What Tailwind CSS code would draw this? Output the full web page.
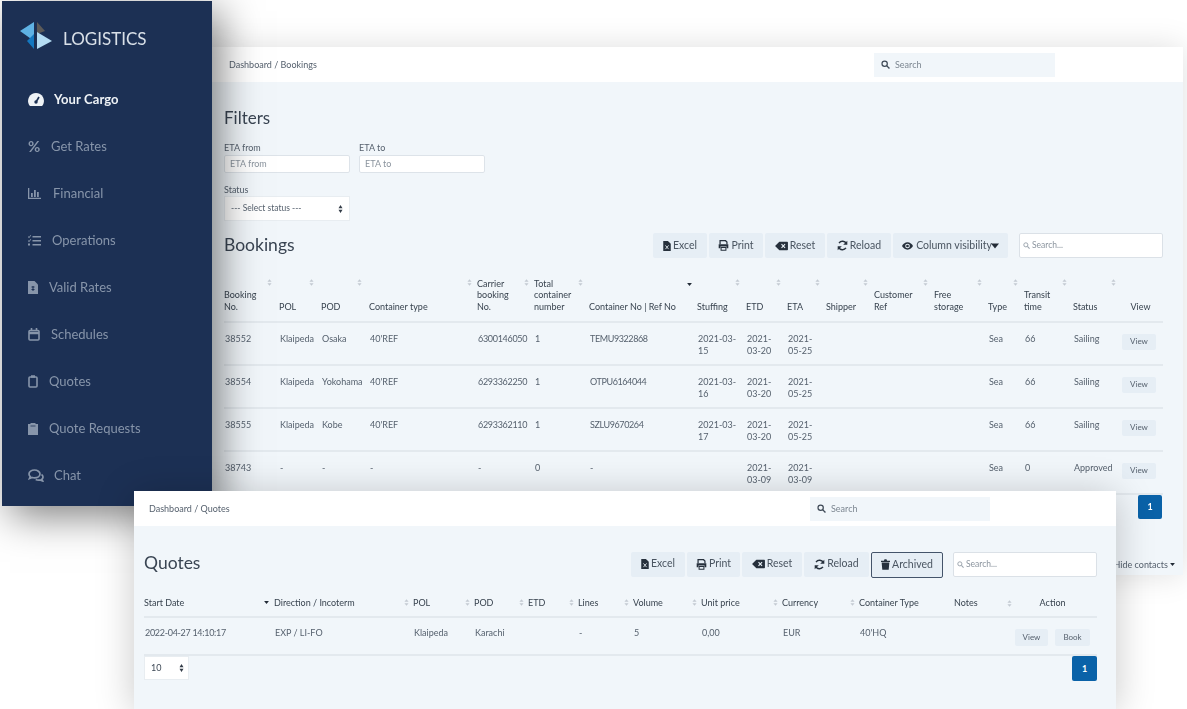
<!DOCTYPE html>
<html lang="en">
<head>
    <meta charset="UTF-8">
    <meta name="viewport" content="width=device-width, initial-scale=1.0">
    <title>Logistics</title>
    <script src="https://cdn.jsdelivr.net/npm/@tailwindcss/browser@4"></script>
</head>
<body class="bg-white font-['Lato',sans-serif] text-[#3f4a57] overflow-hidden">
    <svg class="hidden">
        <symbol id="sort" viewBox="0 0 6 8"><path d="M3 0L5.500 3H.5zM3 8L.5 5h5z" fill="#c3cad2"/></symbol>
        <symbol id="down" viewBox="0 0 8 5"><path d="M0 0h8L4 5z" fill="#222b36"/></symbol>
        <symbol id="search" viewBox="0 0 16 16"><circle cx="6.500" cy="6.500" r="4.700" fill="none" stroke="currentColor" stroke-width="2.200"/><path d="M10 10l5 5" stroke="currentColor" stroke-width="2.400"/></symbol>
        <symbol id="file" viewBox="0 0 12 16"><path d="M0 0h7.500L12 4.500V16H0z" fill="currentColor"/><path d="M3.500 7l5 6M8.500 7l-5 6" stroke="#e8f0f6" stroke-width="1.400"/></symbol>
        <symbol id="print" viewBox="0 0 16 16"><path d="M3 6V1h8l2 2v3" fill="none" stroke="currentColor" stroke-width="1.800"/><path d="M1 6h14v6h-2.500V9.500h-9V12H1z" fill="currentColor"/><path d="M4.500 11h7v4h-7z" fill="none" stroke="currentColor" stroke-width="1.500"/></symbol>
        <symbol id="back" viewBox="0 0 18 14"><path d="M6 1h11a1 1 0 0 1 1 1v10a1 1 0 0 1-1 1H6L0 7z" fill="currentColor"/><path d="M9 4.500l5 5M14 4.500l-5 5" stroke="#e8f0f6" stroke-width="1.600"/></symbol>
        <symbol id="sync" viewBox="0 0 16 16"><path d="M13.500 5.500A6 6 0 0 0 3 4.500M2.500 10.500A6 6 0 0 0 13 11.500" fill="none" stroke="currentColor" stroke-width="2.200"/><path d="M15 1v6H9zM1 15V9h6z" fill="currentColor"/></symbol>
        <symbol id="eye" viewBox="0 0 18 12"><path d="M9 0c4 0 7.500 3 9 6-1.500 3-5 6-9 6S1.500 9 0 6c1.500-3 5-6 9-6z" fill="currentColor"/><circle cx="9" cy="6" r="3.800" fill="#e8f0f6"/><circle cx="9" cy="6" r="2.200" fill="currentColor"/></symbol>
        <symbol id="trash" viewBox="0 0 14 16"><path d="M0 2h4.500l1-2h3l1 2H14v2H0zM1 5h12l-1 11H2z" fill="currentColor"/></symbol>
        <symbol id="select" viewBox="0 0 6 10"><path d="M3 0l2.500 4H.5zM3 10L.5 6h5z" fill="#333c47"/></symbol>
    </svg>

    <div class="relative w-[1187px] h-[709px] overflow-hidden">

        <!-- bookings window -->
        <div class="absolute left-[212px] top-[47px] w-[971px] h-[528px] bg-[#f1f6fa] shadow-[0_0_30px_rgba(0,0,0,0.13)]">
            <div class="h-[35px] bg-white flex items-center pl-[17px] text-[9px] text-[#56616e] blur-[0.3px]">
                <span class="w-[645px]">Dashboard / Bookings</span>
                <div class="w-[181px] h-[24px] bg-[#f1f6fa] flex items-center pl-[7px] gap-[5px] text-[#7d8792]">
                    <svg class="w-[9px] h-[9px] text-[#3f4a57]"><use href="#search"/></svg>Search
                </div>
            </div>
            <div class="pl-[12px] pr-[20px] blur-[0.3px]">
                <h2 class="text-[17px] leading-[20px] mt-[26px] text-[#3a4553]">Filters</h2>
                <div class="flex gap-[9px] mt-[14px]">
                    <div class="w-[126px]">
                        <p class="text-[9px] leading-[11px] text-[#56616e]">ETA from</p>
                        <div class="h-[18px] mt-[2px] bg-white border border-[#dde3e9] rounded-[2px] text-[9px] text-[#8b949e] flex items-center pl-[5px]">ETA from</div>
                    </div>
                    <div class="w-[126px]">
                        <p class="text-[9px] leading-[11px] text-[#56616e]">ETA to</p>
                        <div class="h-[18px] mt-[2px] bg-white border border-[#dde3e9] rounded-[2px] text-[9px] text-[#8b949e] flex items-center pl-[5px]">ETA to</div>
                    </div>
                </div>
                <p class="text-[9px] leading-[11px] mt-[11px] text-[#56616e]">Status</p>
                <div class="w-[126px] h-[25px] mt-[1px] bg-white border border-[#e8edf1] text-[8.500px] text-[#56616e] flex items-center justify-between px-[6px]">
                    --- Select status ---
                    <svg class="w-[5px] h-[8px]"><use href="#select"/></svg>
                </div>
                <div class="flex items-center mt-[12px] h-[25px]">
                    <h2 class="text-[17.500px] text-[#3a4553] w-[429px]">Bookings</h2>
                    <div class="flex gap-[2px] text-[10.500px] text-[#4a5561]">
                        <div class="w-[54px] h-[25px] bg-[#e6eef5] rounded-[2px] flex items-center justify-center gap-[2px]"><svg class="w-[8px] h-[10px] text-[#26303c]"><use href="#file"/></svg>Excel</div>
                        <div class="w-[54px] h-[25px] bg-[#e6eef5] rounded-[2px] flex items-center justify-center gap-[2px]"><svg class="w-[11px] h-[11px] text-[#26303c]"><use href="#print"/></svg>Print</div>
                        <div class="w-[60px] h-[25px] bg-[#e6eef5] rounded-[2px] flex items-center justify-center gap-[2px]"><svg class="w-[13px] h-[10px] text-[#26303c]"><use href="#back"/></svg>Reset</div>
                        <div class="w-[64px] h-[25px] bg-[#e6eef5] rounded-[2px] flex items-center justify-center gap-[2px]"><svg class="w-[11px] h-[11px] text-[#26303c]"><use href="#sync"/></svg>Reload</div>
                        <div class="w-[115px] h-[25px] bg-[#e6eef5] rounded-[2px] flex items-center justify-center gap-[3px]"><svg class="w-[11px] h-[8px] text-[#26303c]"><use href="#eye"/></svg>Column visibility<svg class="-ml-[4px] w-[8px] h-[6px]"><use href="#down"/></svg></div>
                    </div>
                    <div class="ml-[11px] w-[144px] h-[25px] bg-white border border-[#dbe1e7] rounded-[2px] flex items-center pl-[3px] gap-[2px] text-[8.500px] text-[#8b949e]">
                        <svg class="w-[7px] h-[7px] text-[#9aa3ad]"><use href="#search"/></svg>Search...
                    </div>
                </div>
                <table class="table-fixed w-[939px] mt-[18px] border-collapse text-[9px] leading-[11.500px]">
                    <colgroup>
                        <col class="w-[55px]"><col class="w-[42px]"><col class="w-[48px]"><col class="w-[108px]"><col class="w-[57px]"><col class="w-[55px]"><col class="w-[108px]"><col class="w-[49px]"><col class="w-[41px]"><col class="w-[39px]"><col class="w-[48px]"><col class="w-[60px]"><col class="w-[54px]"><col class="w-[36px]"><col class="w-[49px]"><col class="w-[45px]"><col class="w-[45px]">
                    </colgroup>
                    <thead class="text-[#38434f]">
                        <tr class="h-[46px] border-b-2 border-[#e3e9ee] [&>th]:relative [&>th]:align-bottom [&>th]:text-left [&>th]:font-normal [&>th]:pb-[9px]">
                            <th>Booking<br>No.<svg class="absolute right-[7px] top-[3px] w-[5px] h-[7px]"><use href="#sort"/></svg></th>
                            <th>POL<svg class="absolute right-[7px] top-[3px] w-[5px] h-[7px]"><use href="#sort"/></svg></th>
                            <th>POD<svg class="absolute right-[7px] top-[3px] w-[5px] h-[7px]"><use href="#sort"/></svg></th>
                            <th>Container type<svg class="absolute right-[5px] top-[3px] w-[5px] h-[7px]"><use href="#sort"/></svg></th>
                            <th>Carrier<br>booking<br>No.<svg class="absolute right-[5px] top-[3px] w-[5px] h-[7px]"><use href="#sort"/></svg></th>
                            <th>Total<br>container<br>number<svg class="absolute right-[6px] top-[3px] w-[5px] h-[7px]"><use href="#sort"/></svg></th>
                            <th>Container No | Ref No<svg class="absolute right-[5px] top-[7px] w-[5px] h-[3px]"><use href="#down"/></svg></th>
                            <th>Stuffing<svg class="absolute right-[6px] top-[3px] w-[5px] h-[7px]"><use href="#sort"/></svg></th>
                            <th>ETD<svg class="absolute right-[6px] top-[3px] w-[5px] h-[7px]"><use href="#sort"/></svg></th>
                            <th>ETA<svg class="absolute right-[6px] top-[3px] w-[5px] h-[7px]"><use href="#sort"/></svg></th>
                            <th>Shipper<svg class="absolute right-[6px] top-[3px] w-[5px] h-[7px]"><use href="#sort"/></svg></th>
                            <th>Customer<br>Ref<svg class="absolute right-[6px] top-[3px] w-[5px] h-[7px]"><use href="#sort"/></svg></th>
                            <th>Free<br>storage<svg class="absolute right-[6px] top-[3px] w-[5px] h-[7px]"><use href="#sort"/></svg></th>
                            <th>Type<svg class="absolute right-[6px] top-[3px] w-[5px] h-[7px]"><use href="#sort"/></svg></th>
                            <th>Transit<br>time<svg class="absolute right-[6px] top-[3px] w-[5px] h-[7px]"><use href="#sort"/></svg></th>
                            <th>Status<svg class="absolute right-[2px] top-[3px] w-[5px] h-[7px]"><use href="#sort"/></svg></th>
                            <th class="text-center!">View</th>
                        </tr>
                    </thead>
                    <tbody class="text-[#56616e] [&>tr]:h-[43px] [&>tr]:border-b-2 [&>tr]:border-[#e3e9ee] [&_td]:align-top [&_td]:pt-[10px] [&_td]:pl-[1px]">
                        <tr><td>38552</td><td>Klaipeda</td><td>Osaka</td><td>40'REF</td><td class="tracking-[-0.3px]">6300146050</td><td>1</td><td class="tracking-[-0.4px]">TEMU9322868</td><td>2021-03-<br>15</td><td>2021-<br>03-20</td><td>2021-<br>05-25</td><td></td><td></td><td></td><td>Sea</td><td>66</td><td>Sailing</td><td><div class="w-[34px] h-[16px] ml-[3px] mt-[1px] bg-[#e6eef5] rounded-[2px] text-[8px] flex items-center justify-center">View</div></td></tr>
                        <tr><td>38554</td><td>Klaipeda</td><td>Yokohama</td><td>40'REF</td><td class="tracking-[-0.3px]">6293362250</td><td>1</td><td class="tracking-[-0.4px]">OTPU6164044</td><td>2021-03-<br>16</td><td>2021-<br>03-20</td><td>2021-<br>05-25</td><td></td><td></td><td></td><td>Sea</td><td>66</td><td>Sailing</td><td><div class="w-[34px] h-[16px] ml-[3px] mt-[1px] bg-[#e6eef5] rounded-[2px] text-[8px] flex items-center justify-center">View</div></td></tr>
                        <tr><td>38555</td><td>Klaipeda</td><td>Kobe</td><td>40'REF</td><td class="tracking-[-0.3px]">6293362110</td><td>1</td><td class="tracking-[-0.4px]">SZLU9670264</td><td>2021-03-<br>17</td><td>2021-<br>03-20</td><td>2021-<br>05-25</td><td></td><td></td><td></td><td>Sea</td><td>66</td><td>Sailing</td><td><div class="w-[34px] h-[16px] ml-[3px] mt-[1px] bg-[#e6eef5] rounded-[2px] text-[8px] flex items-center justify-center">View</div></td></tr>
                        <tr><td>38743</td><td>-</td><td>-</td><td>-</td><td>-</td><td>0</td><td>-</td><td></td><td>2021-<br>03-09</td><td>2021-<br>03-09</td><td></td><td></td><td></td><td>Sea</td><td>0</td><td>Approved</td><td><div class="w-[34px] h-[16px] ml-[3px] mt-[1px] bg-[#e6eef5] rounded-[2px] text-[8px] flex items-center justify-center">View</div></td></tr>
                    </tbody>
                </table>
                <div class="flex justify-end mr-[1px]">
                    <div class="w-[24px] h-[24px] bg-[#0a62a8] rounded-[2px] text-white text-[9px] font-bold flex items-center justify-center">1</div>
                </div>
                <div class="flex justify-end items-center mt-[39px] -mr-[12px] gap-[2px] text-[9px] text-[#56616e]">Hide contacts<svg class="w-[5px] h-[3px]"><use href="#down"/></svg></div>
            </div>
        </div>

        <!-- sidebar -->
        <aside class="absolute left-[2px] top-[1px] w-[210px] h-[505px] bg-[#1c3054] shadow-[8px_10px_38px_rgba(0,0,0,0.5)]">
            <div class="flex items-center h-[75px] pl-[18px] blur-[0.4px]">
                <svg class="w-[34px] h-[30px] -mt-[3px]" viewBox="0 0 34 30">
                    <path d="M0 9L14 0v19z" fill="#5fb2e4"/>
                    <path d="M17 0l8 9-8 3z" fill="#5c5a58"/>
                    <path d="M7 19l7-7v15z" fill="#1478c0"/>
                    <path d="M17 10l15 9-15 8z" fill="#b4dcf3"/>
                </svg>
                <span class="ml-[9px] text-[17px] text-[#d9e0e8]">LOGISTICS</span>
            </div>
            <nav class="text-[13px] text-[#8795aa] blur-[0.4px] [&>a]:flex [&>a]:items-center [&>a]:h-[47px] [&>a]:pl-[26px]">
                <a class="font-bold text-[#eef2f6]!">
                    <svg class="w-[16px] h-[13px]" viewBox="0 0 16 13"><path d="M8 0a8 8 0 0 1 6.900 12L14 13H2l-.9-1A8 8 0 0 1 8 0z" fill="#eef2f6"/><path d="M8 9l3-5" stroke="#1c3054" stroke-width="1.600"/><circle cx="8" cy="9" r="1.700" fill="#1c3054"/></svg>
                    <span class="ml-[10px] tracking-[0.1px]">Your Cargo</span>
                </a>
                <a>
                    <span class="w-[13px] text-[15px] leading-none font-bold">%</span>
                    <span class="ml-[10px]">Get Rates</span>
                </a>
                <a>
                    <svg class="w-[13px] h-[11px]" viewBox="0 0 13 11" fill="#8795aa"><path d="M0 0h1.300v9.700H13V11H0z"/><path d="M3 5h1.800v4H3zM6 2h1.800v7H6zM9 4h1.800v5H9z"/></svg>
                    <span class="ml-[12px]">Financial</span>
                </a>
                <a>
                    <svg class="w-[13px] h-[11px]" viewBox="0 0 13 11" fill="#8795aa"><path d="M4.500 1H13v1.500H4.500zM4.500 5H13v1.500H4.500zM4.500 9H13v1.500H4.500zM0 1l1 1 1.500-2 .7.6L1 3.200 0 2zM0 5l1 1 1.500-2 .7.6L1 7.200 0 6zM0 8.500h2V10.500H0z"/></svg>
                    <span class="ml-[11px]">Operations</span>
                </a>
                <a>
                    <svg class="w-[10px] h-[13px]" viewBox="0 0 10 13"><path d="M0 0h6.500L10 3.500V13H0z" fill="#8795aa"/><path d="M3.500 6h3M3.500 8.500h3M5 5v5" stroke="#1c3054" stroke-width="1"/></svg>
                    <span class="ml-[11px]">Valid Rates</span>
                </a>
                <a>
                    <svg class="w-[12px] h-[13px]" viewBox="0 0 12 13" fill="none" stroke="#8795aa" stroke-width="1.600"><rect x="1" y="2.500" width="10" height="9.500" rx="1"/><path d="M1 5h10" stroke-width="2.500"/><path d="M3.500 0v3M8.500 0v3"/></svg>
                    <span class="ml-[11px]">Schedules</span>
                </a>
                <a>
                    <svg class="w-[10px] h-[13px]" viewBox="0 0 10 13" fill="none" stroke="#8795aa" stroke-width="1.600"><rect x="1" y="2" width="8" height="10" rx="1"/><path d="M3 1.500h4" stroke-width="2.500"/></svg>
                    <span class="ml-[11px]">Quotes</span>
                </a>
                <a>
                    <svg class="w-[10px] h-[13px]" viewBox="0 0 10 13" fill="#8795aa"><path d="M0 2h2.500V1h5v1H10v11H0z"/><path d="M2.500 4h5" stroke="#1c3054" stroke-width=".8"/></svg>
                    <span class="ml-[11px]">Quote Requests</span>
                </a>
                <a>
                    <svg class="w-[16px] h-[13px]" viewBox="0 0 16 13" fill="none" stroke="#8795aa" stroke-width="1.700"><path d="M6.500 1C3.500 1 1 2.700 1 5c0 1 .5 1.900 1.300 2.600L1.500 9.500l2.700-1c.7.2 1.500.3 2.300.3 3 0 5.500-1.700 5.500-3.800S9.500 1 6.500 1z"/><path d="M13.500 5.500c1 .6 1.500 1.500 1.500 2.500 0 .9-.4 1.600-1 2.200l.7 1.800-2.700-1c-1.500.4-3 .2-4.300-.5"/></svg>
                    <span class="ml-[10px]">Chat</span>
                </a>
            </nav>
        </aside>

        <!-- quotes window -->
        <div class="absolute left-[134px] top-[491px] w-[982px] h-[218px] bg-[#f1f6fa] shadow-[0_4px_36px_rgba(0,0,0,0.22)]">
            <div class="h-[35px] bg-white flex items-center pl-[15px] text-[9px] text-[#56616e] blur-[0.3px]">
                <span class="w-[661px]">Dashboard / Quotes</span>
                <div class="w-[180px] h-[24px] bg-[#f1f6fa] flex items-center pl-[7px] gap-[5px] text-[#7d8792]">
                    <svg class="w-[9px] h-[9px] text-[#3f4a57]"><use href="#search"/></svg>Search
                </div>
            </div>
            <div class="pl-[10px] pr-[19px] blur-[0.3px]">
                <div class="flex items-center mt-[26px] h-[25px]">
                    <h2 class="text-[17.500px] text-[#3a4553] w-[487px] -mt-[3px]">Quotes</h2>
                    <div class="flex gap-[2px] text-[10.500px] text-[#4a5561]">
                        <div class="w-[54px] h-[25px] bg-[#e6eef5] rounded-[2px] flex items-center justify-center gap-[2px]"><svg class="w-[8px] h-[10px] text-[#26303c]"><use href="#file"/></svg>Excel</div>
                        <div class="w-[53px] h-[25px] bg-[#e6eef5] rounded-[2px] flex items-center justify-center gap-[2px]"><svg class="w-[11px] h-[11px] text-[#26303c]"><use href="#print"/></svg>Print</div>
                        <div class="w-[60px] h-[25px] bg-[#e6eef5] rounded-[2px] flex items-center justify-center gap-[2px]"><svg class="w-[13px] h-[10px] text-[#26303c]"><use href="#back"/></svg>Reset</div>
                        <div class="w-[65px] h-[25px] bg-[#e6eef5] rounded-[2px] flex items-center justify-center gap-[2px]"><svg class="w-[11px] h-[11px] text-[#26303c]"><use href="#sync"/></svg>Reload</div>
                        <div class="w-[72px] h-[26px] bg-[#e6eef5] border border-[#44546a] rounded-[2px] flex items-center justify-center gap-[2px]"><svg class="w-[9px] h-[11px] text-[#26303c]"><use href="#trash"/></svg>Archived</div>
                    </div>
                    <div class="ml-[10px] w-[144px] h-[25px] bg-white border border-[#dbe1e7] rounded-[2px] flex items-center pl-[3px] gap-[2px] text-[8.500px] text-[#8b949e]">
                        <svg class="w-[7px] h-[7px] text-[#9aa3ad]"><use href="#search"/></svg>Search...
                    </div>
                </div>
                <table class="table-fixed w-[953px] mt-[11px] border-collapse text-[9px] leading-[11.500px]">
                    <colgroup>
                        <col class="w-[130px]"><col class="w-[139px]"><col class="w-[61px]"><col class="w-[54px]"><col class="w-[50px]"><col class="w-[55px]"><col class="w-[68px]"><col class="w-[81px]"><col class="w-[77px]"><col class="w-[95px]"><col class="w-[143px]">
                    </colgroup>
                    <thead class="text-[#38434f]">
                        <tr class="h-[29px] border-b-2 border-[#e3e9ee] [&>th]:relative [&>th]:text-left [&>th]:font-normal [&>th]:pt-[2px]">
                            <th>Start Date<svg class="absolute right-[5px] top-[13px] w-[5px] h-[3px]"><use href="#down"/></svg></th>
                            <th>Direction / Incoterm<svg class="absolute right-[4px] top-[11px] w-[5px] h-[7px]"><use href="#sort"/></svg></th>
                            <th>POL<svg class="absolute right-[4px] top-[11px] w-[5px] h-[7px]"><use href="#sort"/></svg></th>
                            <th>POD<svg class="absolute right-[4px] top-[11px] w-[5px] h-[7px]"><use href="#sort"/></svg></th>
                            <th>ETD<svg class="absolute right-[4px] top-[11px] w-[5px] h-[7px]"><use href="#sort"/></svg></th>
                            <th>Lines<svg class="absolute right-[4px] top-[11px] w-[5px] h-[7px]"><use href="#sort"/></svg></th>
                            <th>Volume<svg class="absolute right-[4px] top-[11px] w-[5px] h-[7px]"><use href="#sort"/></svg></th>
                            <th>Unit price<svg class="absolute right-[4px] top-[11px] w-[5px] h-[7px]"><use href="#sort"/></svg></th>
                            <th>Currency<svg class="absolute right-[4px] top-[11px] w-[5px] h-[7px]"><use href="#sort"/></svg></th>
                            <th>Container Type</th>
                            <th><div class="flex items-center"><span>Notes</span><svg class="ml-[29px] w-[5px] h-[7px]"><use href="#sort"/></svg><span class="ml-[28px]">Action</span></div></th>
                        </tr>
                    </thead>
                    <tbody class="text-[#56616e]">
                        <tr class="h-[38px] border-b-2 border-[#e3e9ee] [&>td]:pl-[1px] [&>td]:align-top [&>td]:pt-[9px]">
                            <td class="tracking-[-0.3px]">2022-04-27 14:10:17</td><td>EXP / LI-FO</td><td>Klaipeda</td><td>Karachi</td><td></td><td>-</td><td>5</td><td>0,00</td><td>EUR</td><td>40'HQ</td>
                            <td class="pt-[11px]!"><div class="flex justify-end gap-[7px] pr-[7px] text-[8px]"><div class="w-[33px] h-[17px] bg-[#e6eef5] rounded-[2px] flex items-center justify-center">View</div><div class="w-[35px] h-[17px] bg-[#e6eef5] rounded-[2px] flex items-center justify-center">Book</div></div></td>
                        </tr>
                    </tbody>
                </table>
                <div class="flex justify-between">
                    <div class="w-[45px] h-[24px] bg-white border border-[#e8edf1] text-[9px] flex items-center justify-between pl-[6px] pr-[4px]">10<svg class="w-[5px] h-[8px]"><use href="#select"/></svg></div>
                    <div class="w-[25px] h-[25px] bg-[#0a62a8] rounded-[2px] text-white text-[9px] font-bold flex items-center justify-center">1</div>
                </div>
            </div>
        </div>
    </div>
</body>
</html>
